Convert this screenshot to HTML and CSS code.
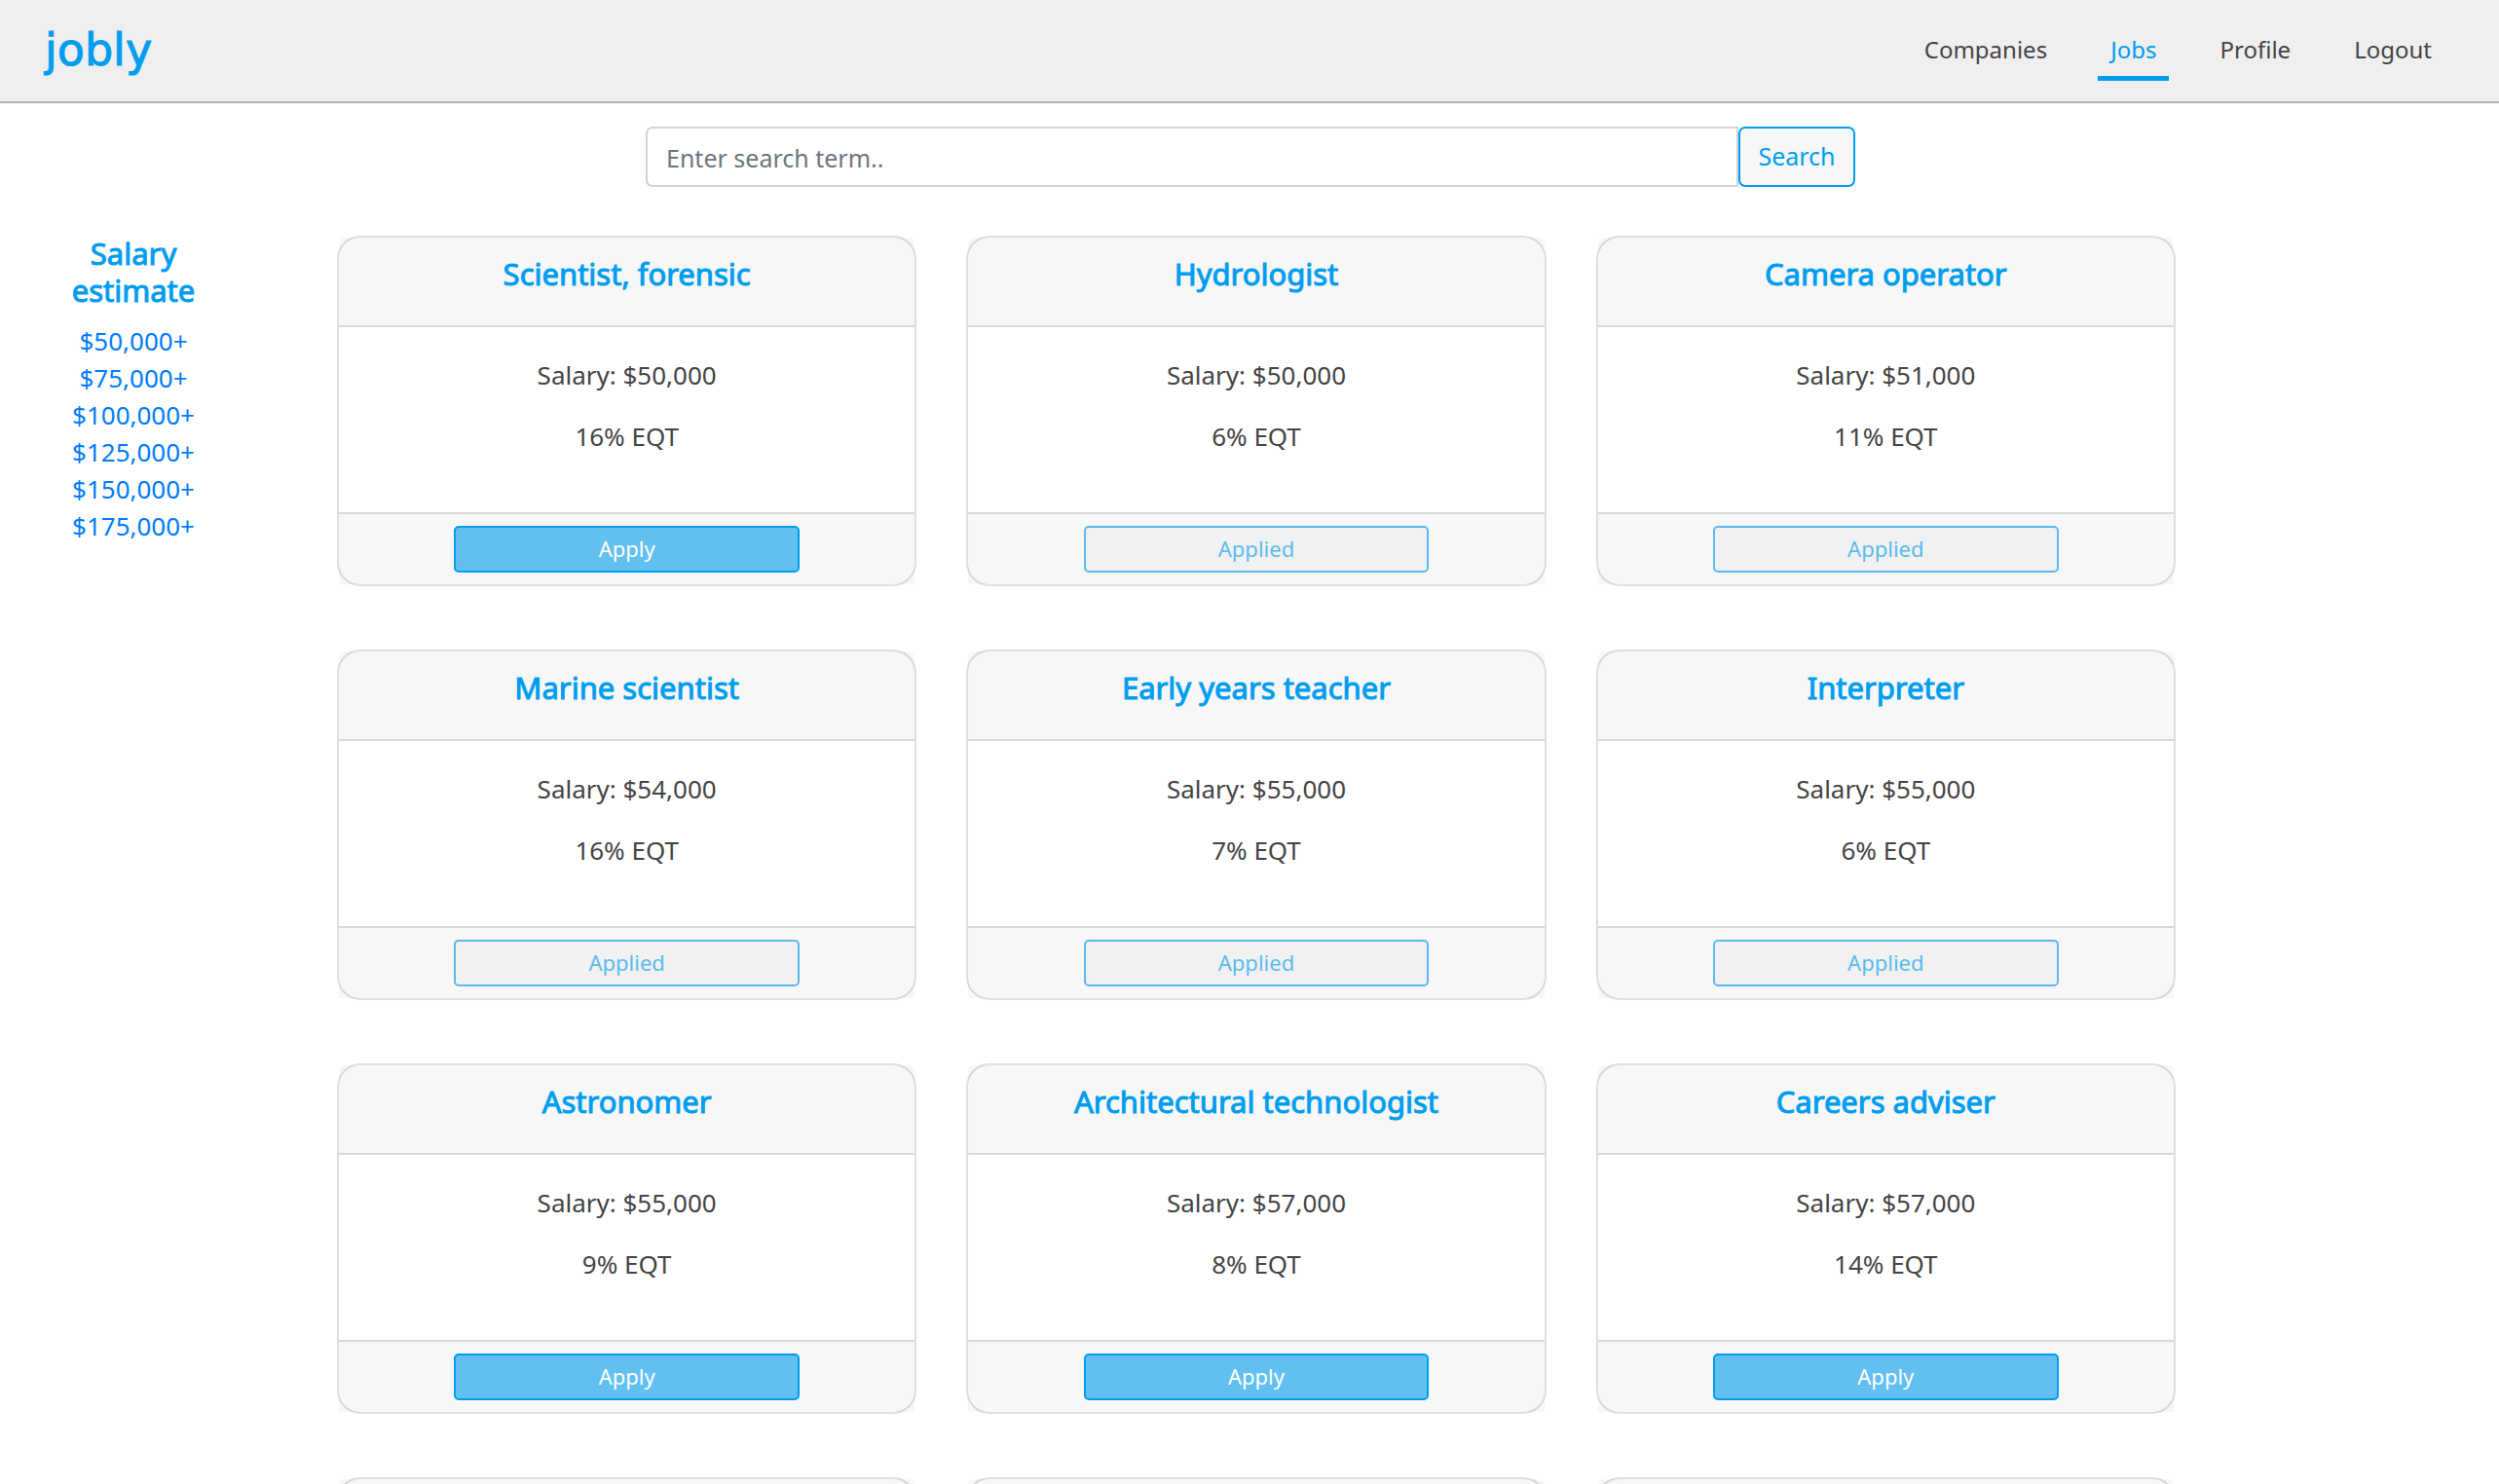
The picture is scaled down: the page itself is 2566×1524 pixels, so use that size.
FILE: index.html
```html
<!DOCTYPE html>
<html lang="en">
<head>
<meta charset="utf-8">
<meta name="viewport" content="width=device-width, initial-scale=1">
<title>Jobly</title>
<link rel="stylesheet" href="styles.css">
</head>
<body>
<header class="navbar">
  <a class="brand" href="#">jobly</a>
  <nav class="nav">
    <a class="nav-link" href="#companies">Companies</a>
    <a class="nav-link active" href="#jobs" aria-current="page">Jobs</a>
    <a class="nav-link" href="#profile">Profile</a>
    <a class="nav-link" href="#logout">Logout</a>
  </nav>
</header>

<form class="search">
  <input class="search-input" type="text" aria-label="Search term" placeholder="Enter search term..">
  <button class="search-button" type="button">Search</button>
</form>

<div class="layout">
  <aside class="filters">
    <h2 class="filters-title">Salary estimate</h2>
    <a class="filter" href="#50">$50,000+</a>
    <a class="filter" href="#75">$75,000+</a>
    <a class="filter" href="#100">$100,000+</a>
    <a class="filter" href="#125">$125,000+</a>
    <a class="filter" href="#150">$150,000+</a>
    <a class="filter" href="#175">$175,000+</a>
  </aside>

  <main class="jobs">
    <article class="card">
      <h3 class="card-header">Scientist, forensic</h3>
      <div class="card-body"><p>Salary: $50,000</p><p>16% EQT</p></div>
      <div class="card-footer"><button class="apply">Apply</button></div>
    </article>
    <article class="card">
      <h3 class="card-header">Hydrologist</h3>
      <div class="card-body"><p>Salary: $50,000</p><p>6% EQT</p></div>
      <div class="card-footer"><button class="apply" disabled>Applied</button></div>
    </article>
    <article class="card">
      <h3 class="card-header">Camera operator</h3>
      <div class="card-body"><p>Salary: $51,000</p><p>11% EQT</p></div>
      <div class="card-footer"><button class="apply" disabled>Applied</button></div>
    </article>
    <article class="card">
      <h3 class="card-header">Marine scientist</h3>
      <div class="card-body"><p>Salary: $54,000</p><p>16% EQT</p></div>
      <div class="card-footer"><button class="apply" disabled>Applied</button></div>
    </article>
    <article class="card">
      <h3 class="card-header">Early years teacher</h3>
      <div class="card-body"><p>Salary: $55,000</p><p>7% EQT</p></div>
      <div class="card-footer"><button class="apply" disabled>Applied</button></div>
    </article>
    <article class="card">
      <h3 class="card-header">Interpreter</h3>
      <div class="card-body"><p>Salary: $55,000</p><p>6% EQT</p></div>
      <div class="card-footer"><button class="apply" disabled>Applied</button></div>
    </article>
    <article class="card">
      <h3 class="card-header">Astronomer</h3>
      <div class="card-body"><p>Salary: $55,000</p><p>9% EQT</p></div>
      <div class="card-footer"><button class="apply">Apply</button></div>
    </article>
    <article class="card">
      <h3 class="card-header">Architectural technologist</h3>
      <div class="card-body"><p>Salary: $57,000</p><p>8% EQT</p></div>
      <div class="card-footer"><button class="apply">Apply</button></div>
    </article>
    <article class="card">
      <h3 class="card-header">Careers adviser</h3>
      <div class="card-body"><p>Salary: $57,000</p><p>14% EQT</p></div>
      <div class="card-footer"><button class="apply">Apply</button></div>
    </article>
    <article class="card"><div class="card-header"></div></article>
    <article class="card"><div class="card-header"></div></article>
    <article class="card"><div class="card-header"></div></article>
  </main>
</div>
</body>
</html>
```
FILE: styles.css
```css
* {
  box-sizing: border-box;
}

html {
  height: 100%;
}

body {
  height: 100%;
  margin: 0;
  overflow: hidden;
  background: #fff;
  color: #444;
  font: 26px/38px "Noto Sans", sans-serif;
}

a {
  text-decoration: none;
}

button,
input {
  font-family: inherit;
}

.navbar {
  display: flex;
  align-items: center;
  justify-content: space-between;
  height: 106px;
  padding: 0 56px 2px 46px;
  background: #efefef;
  border-bottom: 2px solid #b4b4b4;
}

.brand {
  color: #009dee;
  font-family: "DejaVu Sans", sans-serif;
  font-size: 46px;
  line-height: 58px;
  -webkit-text-stroke: 1px #009dee;
}

.nav {
  display: flex;
  gap: 39px;
}

.nav-link {
  padding: 13px 13px 8px;
  border-bottom: 5px solid transparent;
  color: #444;
  font-size: 24px;
}

.nav-link.active {
  color: #009dee;
  border-color: #009dee;
}

.search {
  display: flex;
  width: 1242px;
  max-width: 90%;
  margin: 24px auto 50px;
  padding-left: 2px;
  box-sizing: content-box;
}

.search-input {
  flex: 1;
  min-width: 0;
  height: 62px;
  padding: 2px 19px 0;
  border: 2px solid #ced4da;
  border-radius: 7px 0 0 7px;
  background: #fff;
  font-size: 25px;
}

.search-input::placeholder {
  color: #6c757d;
  opacity: 1;
}

.search-button {
  width: 120px;
  padding: 0 0 2px;
  border: 2px solid #009dee;
  border-radius: 7px;
  background: #f7f7f7;
  color: #009dee;
  font-size: 25px;
}

.layout {
  display: grid;
  grid-template-columns: 274px minmax(0, 1888px);
  column-gap: 72px;
  padding-right: 12%;
}

.filters {
  display: flex;
  flex-direction: column;
  align-items: center;
  text-align: center;
}

.filters-title,
.card-header {
  margin: 0;
  color: #009dee;
  font-size: 31px;
  font-weight: 400;
  line-height: 38px;
  -webkit-text-stroke: 1px #009dee;
}

.filters-title {
  width: 140px;
  margin: -1px 0 14px;
}

.filter {
  color: #007bff;
}

.jobs {
  display: grid;
  grid-template-columns: repeat(3, minmax(0, 1fr));
  gap: 65px 51px;
}

.card {
  border: 2px solid rgba(0, 0, 0, .125);
  border-radius: 24px;
  background: #fff;
  text-align: center;
}

.card-header {
  height: 92px;
  padding-top: 18px;
  background: rgba(0, 0, 0, .03);
  border-bottom: 2px solid rgba(0, 0, 0, .125);
  border-radius: 6px 6px 0 0;
}

.card-body {
  height: 190px;
  padding-top: 30px;
}

.card-body p {
  margin: 0 0 25px;
}

.card-footer {
  padding: 12px 0;
  background: rgba(0, 0, 0, .03);
  border-top: 2px solid rgba(0, 0, 0, .125);
}

.apply {
  display: block;
  width: 60%;
  height: 48px;
  margin: 0 auto;
  padding: 0 0 2px;
  border: 2px solid #009dee;
  border-radius: 5px;
  background: #62c0f0;
  color: #fff;
  font-size: 22px;
}

.apply:disabled {
  background: #f1f1f1;
  color: #5abbee;
  border-color: #5abbee;
}
```
